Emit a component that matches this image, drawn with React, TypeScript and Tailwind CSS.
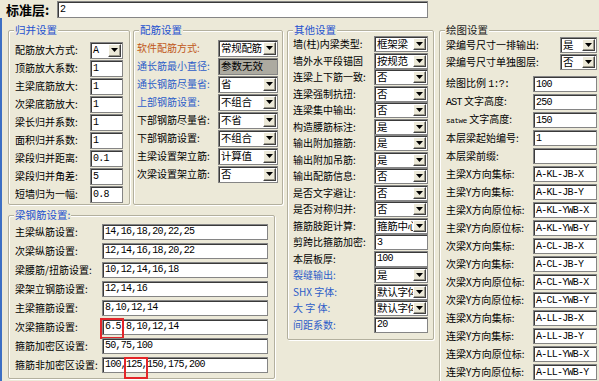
import type { ReactNode } from 'react'

type Tone = 'blue' | 'orange'

interface Row {
  label: string
  kind: 'input' | 'select' | 'disabled'
  value: string
  tone?: Tone
}

const isAscii = (s: string) => /^[\x00-\x7f]*$/.test(s)

// 文本框 (下沉边框)
function TextBox({ value, className, children }: { value: string; className: string; children?: ReactNode }) {
  return (
    <div
      className={`relative flex items-center bg-white border border-[#858585] shadow-[inset_1px_1px_0_#3a3a3a] pl-[2px] whitespace-nowrap ${className}`}
    >
      <span className={isAscii(value) ? "font-['Liberation_Mono',monospace] text-[10px] tracking-[-0.75px]" : 'text-[10.5px]'}>{value}</span>
      {children}
    </div>
  )
}

// 下拉框
function Combo({ value, className }: { value: string; className: string }) {
  return (
    <div className={`flex items-stretch bg-white border border-[#858585] shadow-[inset_1px_1px_0_#3a3a3a] ${className}`}>
      <span
        className={`flex-1 flex items-center pl-[2px] overflow-hidden whitespace-nowrap ${
          isAscii(value) ? "font-['Liberation_Mono',monospace] text-[10px] tracking-[-0.75px]" : 'text-[10.5px] tracking-[-0.3px]'
        }`}
      >
        {value}
      </span>
      <span className="w-[13px] shrink-0 my-[1px] mr-[1px] flex items-center justify-center bg-[#ece9d8] border border-t-white border-l-white border-r-[#404040] border-b-[#404040] shadow-[inset_-1px_-1px_0_#9d9a8c]">
        <svg width="7" height="4" viewBox="0 0 7 4">
          <path d="M0 0h7L3.5 4z" fill="#000" />
        </svg>
      </span>
    </div>
  )
}

// 分组框
function Group({ title, titleClass, className, children }: { title: string; titleClass?: string; className: string; children: ReactNode }) {
  return (
    <div className={`relative shrink-0 rounded-[2px] border border-[#b3b09e] shadow-[inset_1px_1px_0_#fff,1px_1px_0_#fff] ${className}`}>
      <span className={`absolute -top-[8px] left-[5px] px-[1px] bg-[#ece9d8] text-[10.5px] leading-[14px] whitespace-nowrap ${titleClass ?? 'text-[#1f52cf]'}`}>
        {title}
      </span>
      {children}
    </div>
  )
}

const toneClass = (t?: Tone) => (t === 'blue' ? 'text-[#2c5dc8]' : t === 'orange' ? 'text-[#c0581a]' : '')

function Line({ row, rowH, labelW, ctrlW, ctrlH }: { row: Row; rowH: string; labelW: string; ctrlW: string; ctrlH: string }) {
  return (
    <div className={`flex items-center ${rowH}`}>
      <span className={`shrink-0 whitespace-nowrap leading-none ${labelW} ${toneClass(row.tone)}`}>{row.label}</span>
      {row.kind === 'select' ? (
        <Combo value={row.value} className={`${ctrlW} ${ctrlH}`} />
      ) : row.kind === 'disabled' ? (
        <div className={`flex items-center pl-[2px] text-[10.5px] bg-[#acaaa0] border border-[#858585] shadow-[inset_1px_1px_0_#3a3a3a] ${ctrlW} ${ctrlH}`}>
          {row.value}
        </div>
      ) : (
        <TextBox value={row.value} className={`${ctrlW} ${ctrlH}`} />
      )}
    </div>
  )
}

const mergeRows: Row[] = [
  { label: '配筋放大方式:', kind: 'select', value: 'A' },
  { label: '顶筋放大系数:', kind: 'input', value: '1' },
  { label: '主梁底筋放大:', kind: 'input', value: '1' },
  { label: '次梁底筋放大:', kind: 'input', value: '1' },
  { label: '梁长归并系数:', kind: 'input', value: '1' },
  { label: '面积归并系数:', kind: 'input', value: '1' },
  { label: '梁段归并距离:', kind: 'input', value: '0.1' },
  { label: '梁段归并角差:', kind: 'input', value: '5' },
  { label: '短墙归为一幅:', kind: 'input', value: '0.8' },
]

const rebarRows: Row[] = [
  { label: '软件配筋方式:', kind: 'select', value: '常规配筋', tone: 'orange' },
  { label: '通长筋最小直径:', kind: 'disabled', value: '参数无效', tone: 'blue' },
  { label: '通长钢筋尽量省:', kind: 'select', value: '省', tone: 'blue' },
  { label: '上部钢筋设置:', kind: 'select', value: '不组合', tone: 'blue' },
  { label: '下部钢筋尽量省:', kind: 'select', value: '不省' },
  { label: '下部钢筋设置:', kind: 'select', value: '不组合' },
  { label: '主梁设置架立筋:', kind: 'select', value: '计算值' },
  { label: '次梁设置架立筋:', kind: 'select', value: '否' },
]

const otherRows: Row[] = [
  { label: '墙(柱)内梁类型:', kind: 'select', value: '框架梁' },
  { label: '墙外水平段锚固', kind: 'select', value: '按规范' },
  { label: '连梁上下筋一致:', kind: 'select', value: '否' },
  { label: '连梁强制抗扭:', kind: 'select', value: '否' },
  { label: '连梁集中输出:', kind: 'select', value: '否' },
  { label: '构造腰筋标注:', kind: 'select', value: '是' },
  { label: '输出附加箍筋:', kind: 'select', value: '是' },
  { label: '输出附加吊筋:', kind: 'select', value: '是' },
  { label: '输出配筋信息:', kind: 'select', value: '否' },
  { label: '是否文字避让:', kind: 'select', value: '否' },
  { label: '是否对称归并:', kind: 'select', value: '否' },
  { label: '箍筋肢距计算:', kind: 'select', value: '箍筋中心' },
  { label: '剪跨比箍筋加密:', kind: 'input', value: '3' },
  { label: '本层板厚:', kind: 'input', value: '100' },
  { label: '裂缝输出:', kind: 'select', value: '是', tone: 'blue' },
  { label: 'SHX 字体:', kind: 'select', value: '默认字体', tone: 'blue' },
  { label: '大 字 体:', kind: 'select', value: '默认字体', tone: 'blue' },
  { label: '间距系数:', kind: 'input', value: '20', tone: 'blue' },
]

const layerRows: Row[] = [
  { label: '主梁X方向集标:', kind: 'input', value: 'A-KL-JB-X' },
  { label: '主梁Y方向集标:', kind: 'input', value: 'A-KL-JB-Y' },
  { label: '主梁X方向原位标:', kind: 'input', value: 'A-KL-YWB-X' },
  { label: '主梁Y方向原位标:', kind: 'input', value: 'A-KL-YWB-Y' },
  { label: '次梁X方向集标:', kind: 'input', value: 'A-CL-JB-X' },
  { label: '次梁Y方向集标:', kind: 'input', value: 'A-CL-JB-Y' },
  { label: '次梁X方向原位标:', kind: 'input', value: 'A-CL-YWB-X' },
  { label: '次梁Y方向原位标:', kind: 'input', value: 'A-CL-YWB-Y' },
  { label: '连梁X方向集标:', kind: 'input', value: 'A-LL-JB-X' },
  { label: '连梁Y方向集标:', kind: 'input', value: 'A-LL-JB-Y' },
  { label: '连梁X方向原位标:', kind: 'input', value: 'A-LL-YWB-X' },
  { label: '连梁Y方向原位标:', kind: 'input', value: 'A-LL-YWB-Y' },
]

const beamRows = [
  { label: '主梁纵筋设置:', value: '14,16,18,20,22,25' },
  { label: '次梁纵筋设置:', value: '12,14,16,18,20,22' },
  { label: '梁腰筋/扭筋设置:', value: '10,12,14,16,18' },
  { label: '梁架立钢筋设置:', value: '12,14,16' },
  { label: '主梁箍筋设置:', value: '8,10,12,14' },
  { label: '次梁箍筋设置:', value: '6.5,8,10,12,14', mark: 'left-[-3px] top-[-2px] w-[24px] h-[21px]' },
  { label: '箍筋加密区设置:', value: '50,75,100' },
  { label: '箍筋非加密区设置:', value: '100,125,150,175,200', mark: 'left-[21px] top-[-1px] w-[24px] h-[22px]' },
]

export default function App() {
  return (
    <div className="w-[599px] h-[381px] overflow-hidden bg-[#ece9d8] text-black text-[10px] font-['Noto_Sans_CJK_SC',sans-serif]">
      {/* 标准层 */}
      <div className="flex items-start h-[18px]">
        <span className="w-[57px] shrink-0 pl-[6px] pt-[2px] font-bold text-[13px] leading-[15px]">标准层:</span>
        <TextBox value="2" className="w-[371px] h-[17px] mt-[1px]" />
      </div>

      <div className="flex h-[363px] border-l-2 border-[#3d6fc4] pt-[12px] pl-[6px]">
        {/* 左列 */}
        <div className="flex flex-col w-[275px] shrink-0">
          <div className="flex gap-[3px] h-[175px]">
            <Group title="归并设置" className="w-[122px] h-[175px] pt-[10px] pl-[6px]">
              {mergeRows.map((r) => (
                <Line key={r.label} row={r} rowH="h-[18px]" labelW="w-[75px]" ctrlW="w-[33px]" ctrlH="h-[17px]" />
              ))}
            </Group>
            <Group title="配筋设置" className="w-[150px] h-[175px] pt-[8px] pl-[3px]">
              {rebarRows.map((r) => (
                <Line key={r.label} row={r} rowH="h-[18px]" labelW="w-[81px]" ctrlW="w-[60px]" ctrlH="h-[17px]" />
              ))}
            </Group>
          </div>

          <Group title="梁钢筋设置:" className="w-[267px] h-[164px] mt-[10px] pt-[6px] pl-[6px]">
            {beamRows.map((r) => (
              <div key={r.label} className="flex items-center h-[19px]">
                <span className="w-[87px] shrink-0 whitespace-nowrap leading-none">{r.label}</span>
                <TextBox value={r.value} className="w-[166px] h-[16px]">
                  {r.mark && <span className={`absolute border-2 border-[#e3262a] ${r.mark}`} />}
                </TextBox>
              </div>
            ))}
          </Group>
        </div>

        {/* 其他设置 */}
        <Group title="其他设置" className="ml-[4px] w-[147px] h-[310px] pt-[5px] pl-[5px]">
          {otherRows.map((r) => (
            <Line key={r.label} row={r} rowH="h-[16.5px]" labelW="w-[81px]" ctrlW="w-[54px]" ctrlH="h-[16px]" />
          ))}
        </Group>

        {/* 绘图设置 */}
        <Group title="绘图设置" titleClass="text-[#222]" className="ml-[5px] w-[162px] h-[353px] pt-[5px] pl-[6px]">
          <Line row={{ label: '梁编号尺寸一排输出:', kind: 'select', value: '是' }} rowH="h-[17px]" labelW="w-[114px]" ctrlW="w-[37px]" ctrlH="h-[16px]" />
          <Line row={{ label: '梁编号尺寸单独图层:', kind: 'select', value: '否' }} rowH="h-[17px]" labelW="w-[114px]" ctrlW="w-[37px]" ctrlH="h-[16px]" />
          <div className="h-[5px]" />
          <div className="flex items-center h-[18px]">
            <span className="w-[87px] shrink-0 whitespace-nowrap leading-none">
              绘图比例 <span className="font-['Liberation_Mono',monospace] tracking-[-0.75px]">1:?:</span>
            </span>
            <TextBox value="100" className="w-[64px] h-[16px]" />
          </div>
          <div className="flex items-center h-[18px]">
            <span className="w-[87px] shrink-0 whitespace-nowrap leading-none">
              <span className="font-['Liberation_Mono',monospace] tracking-[-0.75px]">AST</span> 文字高度:
            </span>
            <TextBox value="250" className="w-[64px] h-[16px]" />
          </div>
          <div className="flex items-center h-[18px]">
            <span className="w-[87px] shrink-0 whitespace-nowrap leading-none">
              <span className="font-['Liberation_Mono',monospace] text-[7.5px] tracking-[-0.3px]">satwe</span> 文字高度:
            </span>
            <TextBox value="150" className="w-[64px] h-[16px]" />
          </div>
          <Line row={{ label: '本层梁起始编号:', kind: 'input', value: '1' }} rowH="h-[18px]" labelW="w-[87px]" ctrlW="w-[64px]" ctrlH="h-[16px]" />
          <Line row={{ label: '本层梁前缀:', kind: 'input', value: '' }} rowH="h-[18px]" labelW="w-[87px]" ctrlW="w-[64px]" ctrlH="h-[16px]" />
          {layerRows.map((r) => (
            <Line key={r.label} row={r} rowH="h-[18px]" labelW="w-[87px]" ctrlW="w-[64px]" ctrlH="h-[16px]" />
          ))}
        </Group>
      </div>
    </div>
  )
}
